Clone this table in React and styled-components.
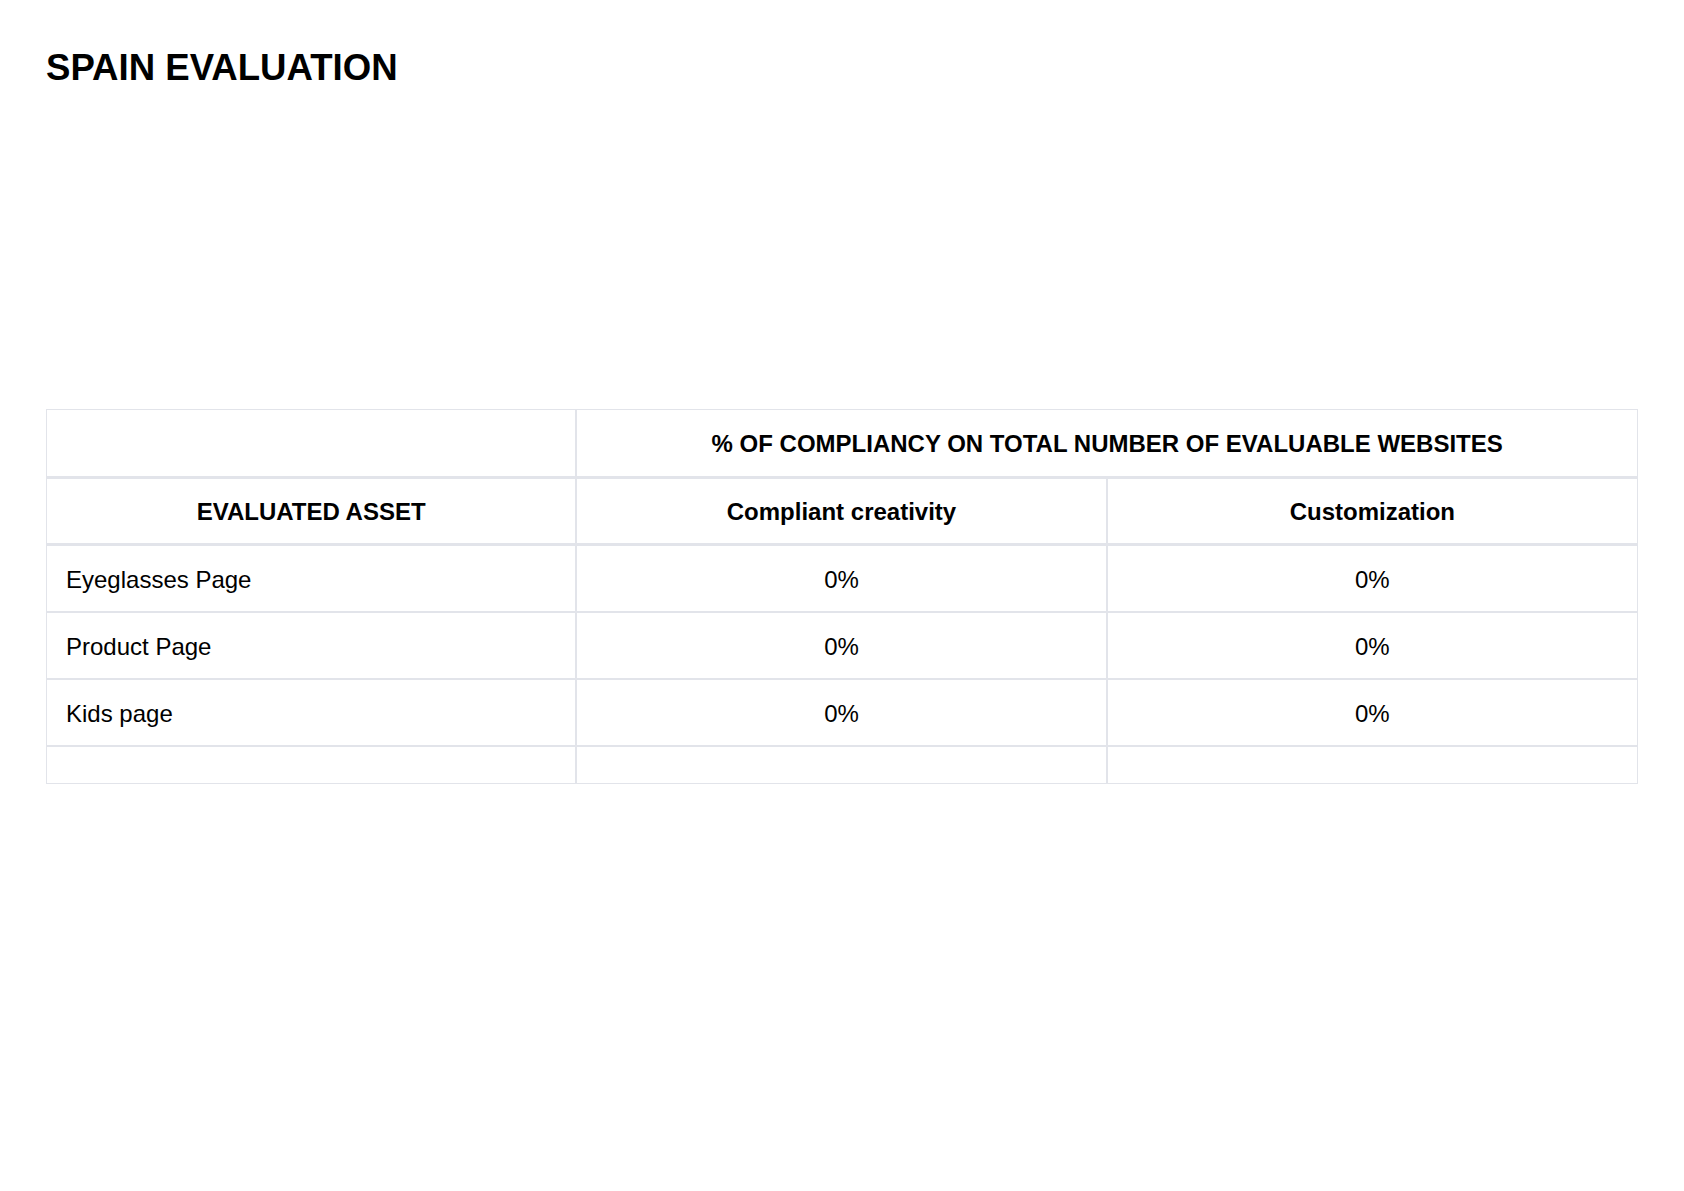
import styled, { createGlobalStyle } from "styled-components";

const GlobalStyle = createGlobalStyle`
  html, body {
    margin: 0;
    padding: 0;
    background: #ffffff;
  }

  body {
    font-family: "Liberation Sans", Arial, sans-serif;
    color: #000;
  }
`;

const Page = styled.main`
  width: 1684px;
  padding: 47px 46px 0;
  box-sizing: border-box;
`;

const Title = styled.h1`
  margin: 0 0 320px;
  font-size: 36.6px;
  line-height: 42px;
  font-weight: 700;
`;

const Table = styled.table`
  width: 1592px;
  table-layout: fixed;
  border-collapse: separate;
  border-spacing: 0;
  border-top: 1px solid #e2e4ea;
  border-left: 1px solid #e2e4ea;
  font-size: 24px;
  line-height: 1.15;
`;

const HeadCell = styled.th`
  box-sizing: border-box;
  height: ${(p) => p.$height}px;
  padding: 1px 19px 0;
  font-weight: 700;
  text-align: center;
  vertical-align: middle;
  border-right: ${(p) => (p.$last ? 1 : 2)}px solid #e2e4ea;
  border-bottom: 3px solid #e2e4ea;
`;

const Cell = styled.td`
  box-sizing: border-box;
  height: ${(p) => (p.$empty ? 37 : 67)}px;
  padding: 2px 19px 0;
  font-weight: 400;
  text-align: ${(p) => (p.$left ? "left" : "center")};
  vertical-align: middle;
  border-right: ${(p) => (p.$last ? 1 : 2)}px solid #e2e4ea;
  border-bottom: ${(p) => (p.$empty ? 1 : 2)}px solid #e2e4ea;
`;

function App() {
  const rows = [
    { asset: "Eyeglasses Page", creativity: "0%", custom: "0%" },
    { asset: "Product Page", creativity: "0%", custom: "0%" },
    { asset: "Kids page", creativity: "0%", custom: "0%" },
  ];

  return (
    <Page>
      <GlobalStyle />
      <Title>SPAIN EVALUATION</Title>

      <Table>
        <thead>
          <tr>
            <HeadCell $height={69}></HeadCell>
            <HeadCell colSpan={2} $height={69} $last>
              % OF COMPLIANCY ON TOTAL NUMBER OF EVALUABLE WEBSITES
            </HeadCell>
          </tr>
          <tr>
            <HeadCell $height={67}>EVALUATED ASSET</HeadCell>
            <HeadCell $height={67}>Compliant creativity</HeadCell>
            <HeadCell $height={67} $last>Customization</HeadCell>
          </tr>
        </thead>
        <tbody>
          {rows.map((row, index) => (
            <tr key={index}>
              <Cell $left>{row.asset}</Cell>
              <Cell>{row.creativity}</Cell>
              <Cell $last>{row.custom}</Cell>
            </tr>
          ))}
          <tr>
            <Cell $empty></Cell>
            <Cell $empty></Cell>
            <Cell $empty $last></Cell>
          </tr>
        </tbody>
      </Table>
    </Page>
  );
}

export default App;
